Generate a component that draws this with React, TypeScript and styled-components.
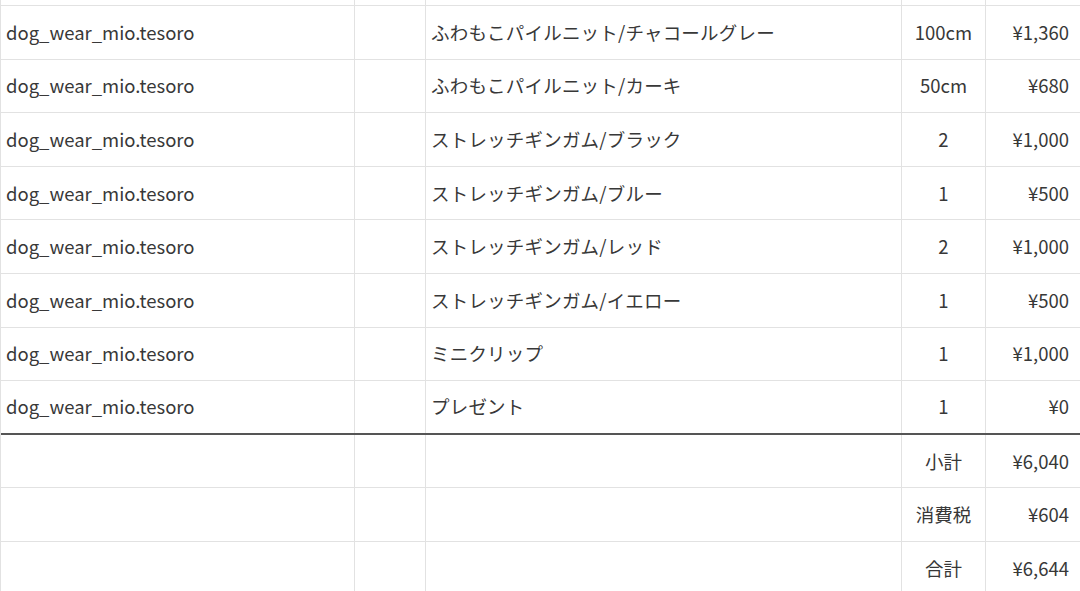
import React from "react";
import styled, { createGlobalStyle } from "styled-components";

const Global = createGlobalStyle`
  html, body { margin: 0; padding: 0; background: #fff; }
  body { overflow: hidden; }
`;

const Viewport = styled.div`
  width: 1080px;
  height: 591px;
  overflow: hidden;
  background: #fff;
  font-family: "Noto Sans CJK JP", "Noto Sans", sans-serif;
  font-size: 18.5px;
  color: #383838;
`;

const Sheet = styled.div`
  margin-top: -47.6px;
  border-left: 1px solid #e2e2e2;
`;

const Row = styled.div<{ $strong?: boolean }>`
  display: grid;
  grid-template-columns: 354px 71px 476px 84px 95px;
  height: 53.6px;
  box-sizing: border-box;
  border-bottom: ${(p) => (p.$strong ? "2px solid #555" : "1px solid #e2e2e2")};
`;

const Cell = styled.div<{ $align?: "left" | "center" | "right"; $wide?: boolean }>`
  display: flex;
  align-items: center;
  justify-content: ${(p) =>
    p.$align === "right" ? "flex-end" : p.$align === "center" ? "center" : "flex-start"};
  padding: 0 ${(p) => (p.$align === "right" ? "11px" : "5px")} 1px 5px;
  box-sizing: border-box;
  border-right: 1px solid #e2e2e2;
  white-space: nowrap;
  overflow: hidden;
  letter-spacing: ${(p) => (p.$wide ? "0.2px" : "0")};
`;

type Item = { name: string; qty: string; price: string };

const items: Item[] = [
  { name: "ふわもこパイルニット/チャコールグレー", qty: "100cm", price: "¥1,360" },
  { name: "ふわもこパイルニット/カーキ", qty: "50cm", price: "¥680" },
  { name: "ストレッチギンガム/ブラック", qty: "2", price: "¥1,000" },
  { name: "ストレッチギンガム/ブルー", qty: "1", price: "¥500" },
  { name: "ストレッチギンガム/レッド", qty: "2", price: "¥1,000" },
  { name: "ストレッチギンガム/イエロー", qty: "1", price: "¥500" },
  { name: "ミニクリップ", qty: "1", price: "¥1,000" },
  { name: "プレゼント", qty: "1", price: "¥0" },
];

const totals = [
  { label: "小計", value: "¥6,040" },
  { label: "消費税", value: "¥604" },
  { label: "合計", value: "¥6,644" },
];

export default function App() {
  return (
    <Viewport>
      <Global />
      <Sheet>
        <Row>
          <Cell />
          <Cell />
          <Cell />
          <Cell />
          <Cell />
        </Row>
        {items.map((it, i) => (
          <Row key={i} $strong={i === items.length - 1}>
            <Cell>dog_wear_mio.tesoro</Cell>
            <Cell />
            <Cell $wide>{it.name}</Cell>
            <Cell $align="center">{it.qty}</Cell>
            <Cell $align="right">{it.price}</Cell>
          </Row>
        ))}
        {totals.map((t, i) => (
          <Row key={i}>
            <Cell />
            <Cell />
            <Cell />
            <Cell $align="center">{t.label}</Cell>
            <Cell $align="right">{t.value}</Cell>
          </Row>
        ))}
      </Sheet>
    </Viewport>
  );
}
